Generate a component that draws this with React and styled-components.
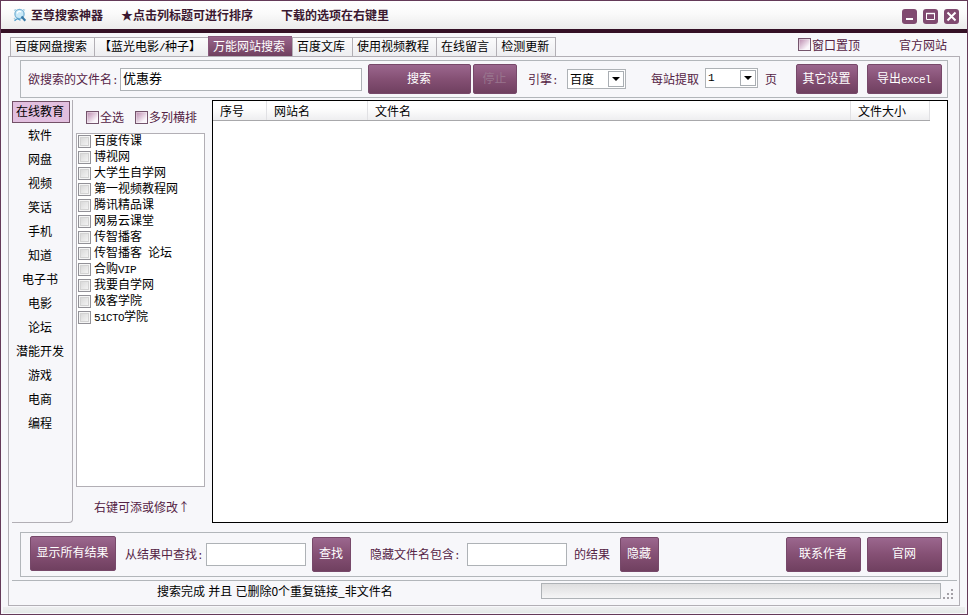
import React from "react";
import styled, { createGlobalStyle, css } from "styled-components";

const tabs = [
  "百度网盘搜索",
  "【蓝光电影/种子】",
  "万能网站搜索",
  "百度文库",
  "使用视频教程",
  "在线留言",
  "检测更新",
];

const categories = [
  "在线教育",
  "软件",
  "网盘",
  "视频",
  "笑话",
  "手机",
  "知道",
  "电子书",
  "电影",
  "论坛",
  "潜能开发",
  "游戏",
  "电商",
  "编程",
];

const sites = [
  "百度传课",
  "博视网",
  "大学生自学网",
  "第一视频教程网",
  "腾讯精品课",
  "网易云课堂",
  "传智播客",
  "传智播客 论坛",
  "合购VIP",
  "我要自学网",
  "极客学院",
  "51CTO学院",
];

const columns = [
  { name: "序号", width: 54 },
  { name: "网站名", width: 101 },
  { name: "文件名", width: 483 },
  { name: "文件大小", width: 79 },
];

// Latin runs and punctuation are half the width of a Chinese character
const Mixed = ({ children }) =>
  children
    .split(/([ -~]+)/)
    .filter(Boolean)
    .map((part, i) => (/^[ -~]/.test(part) ? <Half key={i}>{part}</Half> : part));

export default function App() {
  return (
    <Window>
      <GlobalStyle />

      {/* Title Bar */}
      <TitleBar>
        <Logo />
        <TitleText $gap={18}>至尊搜索神器</TitleText>
        <TitleText $gap={28}>★点击列标题可进行排序</TitleText>
        <TitleText>下载的选项在右键里</TitleText>
        <WindowButtons>
          <WindowButton aria-label="最小化">
            <svg width="15" height="15">
              <rect x="4" y="9" width="7" height="2" fill="#fff" />
            </svg>
          </WindowButton>
          <WindowButton aria-label="最大化">
            <svg width="15" height="15">
              <path d="M3.5 4.5h8v6h-8z" fill="none" stroke="#fff" />
              <path d="M3 4.5h9" stroke="#fff" strokeWidth="1.4" />
            </svg>
          </WindowButton>
          <WindowButton aria-label="关闭">
            <svg width="15" height="15">
              <path d="M3.5 3.5l8 8M11.5 3.5l-8 8" stroke="#fff" strokeWidth="2" />
            </svg>
          </WindowButton>
        </WindowButtons>
      </TitleBar>

      {/* Tabs */}
      <TabRow>
        {tabs.map((tab, i) => (
          <Tab key={tab} $active={i === 2}>
            <Mixed>{tab}</Mixed>
          </Tab>
        ))}
        <TopLinks>
          <Check $gap={39}>
            <PinkBox />
            窗口置顶
          </Check>
          <span>官方网站</span>
        </TopLinks>
      </TabRow>

      <Panel>
        {/* Search Toolbar */}
        <Group $height={38}>
          <Label $left={7}>
            <Mixed>欲搜索的文件名:</Mixed>
          </Label>
          <TextField $left={2} $width={242} $large defaultValue="优惠券" />
          <Button $left={6} $width={103}>搜索</Button>
          <Button $left={2} $width={44} disabled>停止</Button>
          <Label $left={11}>
            <Mixed>引擎:</Mixed>
          </Label>
          <Select $left={9} $width={59}>
            百度
            <Arrow />
          </Select>
          <Label $left={25}>每站提取</Label>
          <Select $left={6} $width={53} $raised>
            <Half>1</Half>
            <Arrow />
          </Select>
          <Label $left={7}>页</Label>
          <Button $left={19} $width={62}>其它设置</Button>
          <Button $left={9} $width={75}>
            <Mixed>导出excel</Mixed>
          </Button>
        </Group>

        {/* Categories, Sites and Results */}
        <Main>
          <Sidebar>
            {categories.map((name, i) => (
              <Category key={name} $active={i === 0}>
                {name}
              </Category>
            ))}
          </Sidebar>

          <SiteColumn>
            <SiteOptions>
              <Check $gap={11}>
                <PinkBox />
                全选
              </Check>
              <Check>
                <PinkBox />
                多列横排
              </Check>
            </SiteOptions>
            <SiteList>
              {sites.map((site) => (
                <Site key={site}>
                  <GreyBox />
                  <span>
                    <Mixed>{site}</Mixed>
                  </span>
                </Site>
              ))}
            </SiteList>
            <Hint>右键可添或修改↑</Hint>
          </SiteColumn>

          <Results>
            <HeaderRow>
              {columns.map((col) => (
                <HeaderCell key={col.name} $width={col.width}>
                  {col.name}
                </HeaderCell>
              ))}
            </HeaderRow>
          </Results>
        </Main>

        {/* Filter Toolbar */}
        <Group $height={45}>
          <Button $left={9} $width={86} $tall $raised>显示所有结果</Button>
          <Label $left={9} $raised>
            <Mixed>从结果中查找:</Mixed>
          </Label>
          <TextField $left={3} $width={100} />
          <Button $left={6} $width={39} $tall>查找</Button>
          <Label $left={19} $raised>
            <Mixed>隐藏文件名包含:</Mixed>
          </Label>
          <TextField $left={7} $width={100} />
          <Label $left={7} $raised>的结果</Label>
          <Button $left={10} $width={39} $tall>隐藏</Button>
          <Button $left={127} $width={75} $tall>联系作者</Button>
          <Button $left={6} $width={75} $tall>官网</Button>
        </Group>

        <StatusBar>
          <StatusText>搜索完成 并且 已删除0个重复链接_非文件名</StatusText>
          <Progress />
          <Grip width="11" height="11" fill="#a3a0a6">
            <path d="M8 0h2v2h-2zM4 4h2v2h-2zM8 4h2v2h-2zM0 8h2v2h-2zM4 8h2v2h-2zM8 8h2v2h-2z" />
          </Grip>
        </StatusBar>
      </Panel>
      <BottomEdge />
    </Window>
  );
}

const Logo = () => (
  <LogoSvg width="14" height="15" viewBox="0 0 14 15">
    <circle cx="6.5" cy="6" r="4.6" fill="#c9e8f7" stroke="#79b4d6" strokeWidth="1.3" />
    <path d="M1 2.5l2-1M10 1.5l2 .8M1 10l1.8 2" stroke="#a8cfe4" strokeWidth="1.2" />
    <path d="M4 5.5c1-2.5 3-2.5 4-1.5" stroke="#fff" strokeWidth="1.2" fill="none" />
    <path d="M8.5 8.5l3.8 4.3" stroke="#3979a6" strokeWidth="2.2" />
    <path d="M1.5 12.8l3-2.2 3 1.6" stroke="#4c9bca" strokeWidth="1.2" fill="none" />
  </LogoSvg>
);

// ─── STYLED COMPONENTS ──────────────────────────────────────────────────────

const GlobalStyle = createGlobalStyle`
  * {
    box-sizing: border-box;
  }

  body {
    margin: 0;
    overflow: hidden;
  }

  body, input, button {
    font-family: "Noto Sans CJK SC", sans-serif;
    font-size: 12px;
  }
`;

const Window = styled.div`
  width: 968px;
  height: 615px;
  display: flex;
  flex-direction: column;
  background: #f7f7fa;
  border: 1px solid #643a58;
  color: #552345;
  line-height: 16px;
  white-space: nowrap;
`;

const Half = styled.span`
  font-family: "Liberation Mono", monospace;
  font-size: 11px;
  letter-spacing: -0.6px;
  line-height: 0;
  white-space: pre;
`;

const TitleBar = styled.header`
  height: 32px;
  flex-shrink: 0;
  display: flex;
  align-items: center;
  padding: 0 8px 3px 12px;
  background: linear-gradient(#ffffff, #fafafa 45%, #ebebeb);
  border-bottom: 4px solid #351126;
`;

const LogoSvg = styled.svg`
  margin: 4px 4px 0 0;
`;

const TitleText = styled.span`
  color: #3b1830;
  font-weight: 600;
  margin-right: ${(p) => p.$gap || 0}px;
  padding-top: 2px;
`;

const WindowButtons = styled.div`
  display: flex;
  gap: 6px;
  margin-left: auto;
  padding-top: 5px;
`;

const WindowButton = styled.button`
  width: 15px;
  height: 15px;
  padding: 0;
  border: 0;
  border-radius: 3px;
  background: #804a70;

  svg {
    display: block;
  }
`;

const TabRow = styled.nav`
  height: 23px;
  flex-shrink: 0;
  display: flex;
  align-items: flex-end;
  padding-left: 9px;
`;

const Tab = styled.div`
  height: 19px;
  padding: 0 7px 0 4px;
  line-height: 15px;
  color: #000;
  background: linear-gradient(#fbfbfc, #ededf0);
  border: 1px solid #b2afb5;
  border-width: 1px 0 0 1px;

  &:nth-child(7) {
    border-right-width: 1px;
    padding-right: 6px;
  }

  ${(p) =>
    p.$active &&
    css`
      height: 20px;
      line-height: 17px;
      color: #fff;
      background: linear-gradient(#99648b, #70405f);
      border-color: #88567b;
    `}
`;

const TopLinks = styled.div`
  display: flex;
  align-items: center;
  height: 23px;
  margin-left: auto;
  padding-right: 20px;
`;

const Check = styled.label`
  display: flex;
  align-items: center;
  gap: 1px;
  margin-right: ${(p) => p.$gap || 0}px;
`;

const PinkBox = styled.i`
  width: 13px;
  height: 13px;
  border: 1px solid #74546c;
  background: linear-gradient(135deg, #b987ac, #faf5fa 75%);
  box-shadow: inset 0 0 0 1px rgba(255, 255, 255, 0.35);
`;

const GreyBox = styled.i`
  width: 13px;
  height: 13px;
  flex-shrink: 0;
  border: 1px solid #929197;
  background: linear-gradient(135deg, #d3d3d3, #fafafa);
  box-shadow: inset 0 0 0 1px #f5f5f5, inset 0 0 0 2px #d3d3d3;
`;

const Panel = styled.main`
  width: 952px;
  height: 550px;
  flex-shrink: 0;
  margin-left: 7px;
  padding: 3px 0 0 3px;
  border: 1px solid #b2afb5;
`;

const Group = styled.section`
  width: 928px;
  height: ${(p) => p.$height}px;
  margin-left: 8px;
  display: flex;
  align-items: center;
  border: 1px solid #b2b6ba;
`;

const Label = styled.span`
  margin-left: ${(p) => p.$left}px;
  margin-bottom: ${(p) => (p.$raised ? 2 : 0)}px;
`;

const TextField = styled.input`
  width: ${(p) => p.$width}px;
  height: 23px;
  margin-left: ${(p) => p.$left}px;
  padding: 0 2px 3px;
  font-size: ${(p) => (p.$large ? 13 : 12)}px;
  color: #000;
  background: #fff;
  border: 1px solid #aeb2b6;
  outline: none;
`;

const Button = styled.button`
  width: ${(p) => p.$width}px;
  height: ${(p) => (p.$tall ? 35 : 30)}px;
  margin: 0 0 ${(p) => (p.$raised ? 2 : 0)}px ${(p) => p.$left}px;
  padding: 0 1px 3px 0;
  line-height: 16px;
  color: #fff;
  background: linear-gradient(#9b678e, #855074 50%, #704060);
  border: 1px solid #77496a;
  border-radius: 2px;

  &:disabled {
    color: #98748d;
  }
`;

const Select = styled.div`
  width: ${(p) => p.$width}px;
  height: 20px;
  margin: 0 0 ${(p) => (p.$raised ? 2 : 0)}px ${(p) => p.$left}px;
  padding: 0 1px 0 2px;
  display: flex;
  align-items: center;
  justify-content: space-between;
  color: #000;
  background: #fff;
  border: 1px solid #aeb2b6;
`;

const Arrow = styled.i`
  width: 16px;
  height: 16px;
  display: flex;
  align-items: center;
  justify-content: center;
  border: 1px solid #a9aeb3;

  &::after {
    content: "";
    border: 4px solid transparent;
    border-top-color: #000;
    border-bottom: 0;
  }
`;

const Main = styled.div`
  height: 434px;
  display: flex;
  align-items: flex-start;
  padding-top: 2px;
`;

const Sidebar = styled.aside`
  width: 61px;
  height: 423px;
  padding: 1px 2px 0 0;
  border-right: 1px solid #b2afb5;
  border-bottom: 1px solid #b2afb5;
  border-bottom-right-radius: 4px;
`;

const Category = styled.div`
  height: 24px;
  padding: 0 2px 0 0;
  line-height: 20px;
  color: #000;
  text-align: center;

  ${(p) =>
    p.$active &&
    css`
      height: 22px;
      margin-bottom: 2px;
      line-height: 18px;
      background: #e2bfdf;
      border: 1px solid #735067;
    `}
`;

const SiteColumn = styled.section`
  width: 129px;
  margin: 0 7px 0 3px;
`;

const SiteOptions = styled.div`
  height: 33px;
  display: flex;
  align-items: center;
  padding: 1px 0 0 10px;
`;

const SiteList = styled.div`
  height: 354px;
  background: #fff;
  border: 1px solid #b2afb5;
`;

const Site = styled.div`
  height: 16px;
  display: flex;
  gap: 3px;
  padding-left: 1px;
  color: #000;
  line-height: 12px;

  i {
    margin-top: 1px;
  }
`;

const Hint = styled.div`
  padding: 12px 0 0 18px;
`;

const Results = styled.section`
  width: 736px;
  height: 423px;
  background: #fff;
  border: 1px solid #000;
`;

const HeaderRow = styled.div`
  display: flex;
  width: 717px;
  height: 20px;
  color: #000;
  background: linear-gradient(#fff 35%, #eeeef0);
  border-bottom: 1px solid #a8a8ab;
`;

const HeaderCell = styled.div`
  width: ${(p) => p.$width}px;
  padding-left: 7px;
  line-height: 19px;
  border-right: 1px solid #e1e1e4;
`;

const StatusBar = styled.footer`
  width: 945px;
  height: 24px;
  margin-top: 3px;
  display: flex;
  border-top: 1px solid #b2b6ba;
`;

const StatusText = styled.span`
  width: 384px;
  margin-left: 145px;
  line-height: 20px;
  word-spacing: 0.5px;
  color: #000;
`;

const Progress = styled.div`
  width: 400px;
  height: 16px;
  margin-top: 2px;
  background: linear-gradient(#dededf, #f5f5f6);
  border: 1px solid #aeb2b6;
`;

const Grip = styled.svg`
  margin: 8px 0 0 2px;
`;

const BottomEdge = styled.div`
  flex: 1;
  margin: 1px 2px 1px;
  background: linear-gradient(#eeeef0, #e4eae7);
`;
